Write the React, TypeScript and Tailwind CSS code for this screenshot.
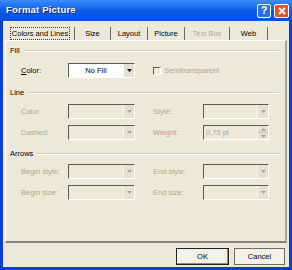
import React from 'react';

const font = { fontFamily: '"Liberation Sans", Arial, sans-serif' };

const Arrow = ({ disabled }: { disabled?: boolean }) => (
  <div className="w-[11px] h-full flex items-center justify-center border-l border-[#f4f3ee] bg-[#e4e1d3]">
    <svg width="5" height="3" viewBox="0 0 5 3">
      <path d="M0 0h5L2.5 3z" fill={disabled ? '#aca899' : '#000'} />
    </svg>
  </div>
);

const Combo = ({ w, text, disabled = true }: { w: string; text?: string; disabled?: boolean }) => (
  <div className={`${w} h-[15px] flex border-t border-l border-[#5e5c52] border-b border-r border-b-white border-r-white ${disabled ? 'bg-[#ece9d8]' : 'bg-white'}`}>
    <div className="flex-1 flex items-center justify-center text-[7.5px] leading-none text-black">{text}</div>
    <Arrow disabled={disabled} />
  </div>
);

const Header = ({ label }: { label: string }) => (
  <div className="flex items-center h-[10px] pl-[4px] pr-[6px]">
    <span className="text-[7.5px] leading-none text-black mr-[4px]">{label}</span>
    <div className="flex-1 border-t border-[#cfccbc] border-b border-b-white" />
  </div>
);

const Row = ({ l1, l2, right }: { l1: string; l2: string; right?: React.ReactNode }) => (
  <div className="flex items-center pl-[15px] h-[15px]">
    <span className="w-[47px] text-[7.5px] leading-none text-[#aca899]">{l1}</span>
    <Combo w="w-[67px]" />
    <span className="ml-[18px] w-[50px] text-[7.5px] leading-none text-[#aca899]">{l2}</span>
    {right ?? <Combo w="w-[66px]" />}
  </div>
);

const tabs = [
  { label: 'Colors and Lines', w: 'w-[69px]' },
  { label: 'Size', w: 'w-[36px]' },
  { label: 'Layout', w: 'w-[37px]' },
  { label: 'Picture', w: 'w-[37px]' },
  { label: 'Text Box', w: 'w-[45px]' },
  { label: 'Web', w: 'w-[38px]' },
];

export default function App() {
  return (
    <div className="w-[292px] h-[270px] flex flex-col bg-[#0a3fd0] select-none" style={font}>
      {/* title bar */}
      <div className="h-[21px] flex items-center pl-[6px] pr-[3px] bg-gradient-to-b from-[#3d8af7] via-[#0a5ce8] to-[#0650db]">
        <span className="flex-1 text-white font-bold text-[9.5px] tracking-[0.2px] [text-shadow:1px_1px_0_#0a2a8a]">Format Picture</span>
        <div className="w-[14px] h-[14px] rounded-[2px] border border-white bg-[#2a6cf0] flex items-center justify-center text-white font-bold text-[11px] leading-none">?</div>
        <div className="ml-[3px] w-[15px] h-[14px] rounded-[2px] border border-white bg-[#e0552e] flex items-center justify-center">
          <svg width="8" height="8" viewBox="0 0 8 8">
            <path d="M1 1l6 6M7 1L1 7" stroke="#fff" strokeWidth="1.8" />
          </svg>
        </div>
      </div>

      {/* body */}
      <div className="flex-1 mx-[3px] mb-[3px] bg-[#ece9d8] flex flex-col">
        {/* tab strip */}
        <div className="flex items-end h-[19px] pl-[3px]">
          {tabs.map((t, i) => (
            <div
              key={t.label}
              className={`${t.w} h-[13px] flex items-center justify-center border-r border-[#6f6d63] text-[7.5px] leading-none ${t.label === 'Text Box' ? 'text-[#aca899]' : 'text-black'}`}
            >
              {i === 0 ? (
                <span className="px-[1px] py-[2px] border border-dotted border-[#444]">{t.label}</span>
              ) : (
                t.label
              )}
            </div>
          ))}
        </div>

        {/* panel */}
        <div className="ml-[2px] mr-[2px] h-[203px] border-l border-t border-white border-r-2 border-b-2 border-r-[#aaa89a] border-b-[#85837a] flex flex-col">
          <div className="mt-[5px]">
            <Header label="Fill" />
          </div>
          <div className="mt-[7px] flex items-center pl-[15px] h-[15px]">
            <span className="w-[47px] text-[7.5px] leading-none text-black">
              <span className="underline">C</span>olor:
            </span>
            <Combo w="w-[67px]" text="No Fill" disabled={false} />
            <div className="ml-[18px] flex items-center">
              <div className="w-[8px] h-[8px] border-t border-l border-[#5e5c52] border-b border-r border-b-white border-r-white" />
              <span className="ml-[3px] text-[7.5px] leading-none text-[#aca899]">Semitransparent</span>
            </div>
          </div>

          <div className="mt-[10px]">
            <Header label="Line" />
          </div>
          <div className="mt-[6px]">
            <Row l1="Color:" l2="Style:" />
          </div>
          <div className="mt-[6px]">
            <Row
              l1="Dashed:"
              l2="Weight:"
              right={
                <div className="w-[66px] h-[15px] flex border-t border-l border-[#5e5c52] border-b border-r border-b-white border-r-white">
                  <div className="flex-1 flex items-center pl-[2px] text-[7.5px] leading-none text-[#aca899]">0,75 pt</div>
                  <div className="w-[11px] flex flex-col border-l border-[#f4f3ee] bg-[#e4e1d3]">
                    <div className="flex-1 flex items-center justify-center border-b border-[#c9c6b6]">
                      <svg width="5" height="3" viewBox="0 0 5 3"><path d="M0 3h5L2.5 0z" fill="#aca899" /></svg>
                    </div>
                    <div className="flex-1 flex items-center justify-center">
                      <svg width="5" height="3" viewBox="0 0 5 3"><path d="M0 0h5L2.5 3z" fill="#aca899" /></svg>
                    </div>
                  </div>
                </div>
              }
            />
          </div>

          <div className="mt-[9px]">
            <Header label="Arrows" />
          </div>
          <div className="mt-[5px]">
            <Row l1="Begin style:" l2="End style:" />
          </div>
          <div className="mt-[6px]">
            <Row l1="Begin size:" l2="End size:" />
          </div>
        </div>

        {/* buttons */}
        <div className="flex justify-end gap-[5px] mt-[5px] pr-[4px]">
          <button className="w-[53px] h-[17px] bg-[#f2f1ea] border border-[#222] shadow-[inset_-1px_-1px_0_#8c8a80] text-[7.5px] leading-none text-black">OK</button>
          <button className="w-[51px] h-[17px] bg-[#f2f1ea] border border-[#6f6d63] text-[7.5px] leading-none text-black">Cancel</button>
        </div>
      </div>
    </div>
  );
}
